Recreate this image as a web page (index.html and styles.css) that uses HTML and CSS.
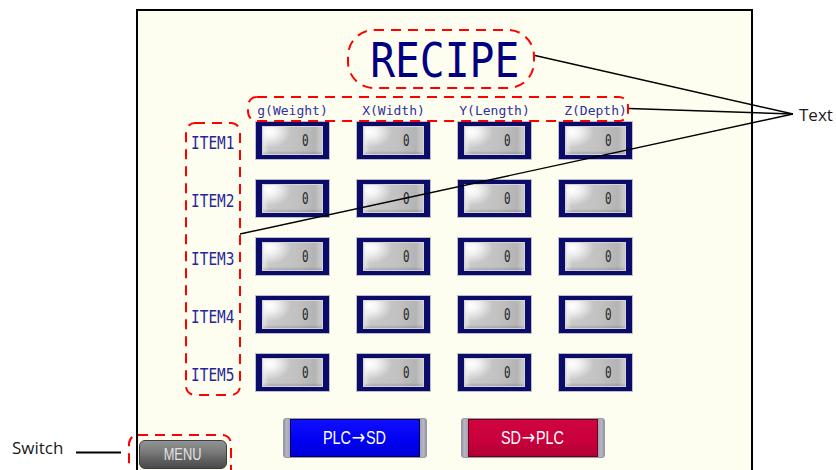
FILE: index.html
```html
<!DOCTYPE html>
<html lang="en">
<head>
<meta charset="utf-8">
<title>Recipe</title>
<link rel="stylesheet" href="styles.css">
</head>
<body>
<div class="stage">
  <div class="panel">
    <h1 class="title"><span>RECIPE</span></h1>

    <div class="head">
      <span></span>
      <span class="col-label">g(Weight)</span>
      <span class="col-label">X(Width)</span>
      <span class="col-label">Y(Length)</span>
      <span class="col-label">Z(Depth)</span>
    </div>

    <div class="rows">
      <div class="item"><span>ITEM1</span></div>
      <div class="cell"><div class="field"><span>0</span></div></div>
      <div class="cell"><div class="field"><span>0</span></div></div>
      <div class="cell"><div class="field"><span>0</span></div></div>
      <div class="cell"><div class="field"><span>0</span></div></div>

      <div class="item"><span>ITEM2</span></div>
      <div class="cell"><div class="field"><span>0</span></div></div>
      <div class="cell"><div class="field"><span>0</span></div></div>
      <div class="cell"><div class="field"><span>0</span></div></div>
      <div class="cell"><div class="field"><span>0</span></div></div>

      <div class="item"><span>ITEM3</span></div>
      <div class="cell"><div class="field"><span>0</span></div></div>
      <div class="cell"><div class="field"><span>0</span></div></div>
      <div class="cell"><div class="field"><span>0</span></div></div>
      <div class="cell"><div class="field"><span>0</span></div></div>

      <div class="item"><span>ITEM4</span></div>
      <div class="cell"><div class="field"><span>0</span></div></div>
      <div class="cell"><div class="field"><span>0</span></div></div>
      <div class="cell"><div class="field"><span>0</span></div></div>
      <div class="cell"><div class="field"><span>0</span></div></div>

      <div class="item"><span>ITEM5</span></div>
      <div class="cell"><div class="field"><span>0</span></div></div>
      <div class="cell"><div class="field"><span>0</span></div></div>
      <div class="cell"><div class="field"><span>0</span></div></div>
      <div class="cell"><div class="field"><span>0</span></div></div>
    </div>

    <div class="footer">
      <button class="menu" type="button"><span>MENU</span></button>
      <div class="actions">
        <button class="btn btn-blue" type="button"><span class="face"><span>PLC<span class="arrow">→</span>SD</span></span></button>
        <button class="btn btn-red" type="button"><span class="face"><span>SD<span class="arrow">→</span>PLC</span></span></button>
      </div>
      <span></span>
    </div>
  </div>
</div>

<div class="annot">
  <svg width="836" height="470" viewBox="0 0 836 470">
    <g fill="none" stroke="#ff0000" stroke-width="2" stroke-dasharray="10 7">
      <rect x="348" y="30" width="186" height="58" rx="26"/>
      <rect x="248" y="97" width="380" height="24" rx="9"/>
      <rect x="186" y="123" width="54" height="272" rx="9"/>
      <rect x="129" y="435" width="102" height="50" rx="9"/>
    </g>
    <g stroke="#000" stroke-width="1.4">
      <line x1="535" y1="55.5" x2="793" y2="114"/>
      <line x1="629" y1="108.5" x2="793" y2="114"/>
      <line x1="240" y1="234" x2="793" y2="114"/>
      <line x1="76" y1="452.5" x2="121" y2="452.5" stroke-width="2"/>
    </g>
  </svg>
  <span class="callout callout-text">Text</span>
  <span class="callout callout-switch">Switch</span>
</div>
</body>
</html>
```

FILE: styles.css
```css
* { box-sizing: border-box; }

html, body {
  margin: 0;
  padding: 0;
  background: #ffffff;
}

body {
  width: 836px;
  height: 470px;
  overflow: hidden;
  position: relative;
  font-family: "DejaVu Sans Mono", monospace;
}

.stage {
  padding: 9px 0 0 136px;
}

.panel {
  width: 617px;
  height: 480px;
  border: 2px solid #000;
  border-bottom: none;
  background: #fefef0;
  display: flex;
  flex-direction: column;
}

.title {
  margin: 25px 0 0;
  font-family: "DejaVu Sans Mono", monospace;
  font-weight: normal;
  font-size: 48px;
  line-height: 48px;
  text-align: center;
  color: #000080;
}
.title span {
  display: inline-block;
  transform: scaleX(0.86);
}

.head,
.rows {
  display: grid;
  grid-template-columns: 37px repeat(4, 73px);
  column-gap: 28px;
  padding-left: 53px;
}

.head {
  margin-top: 19px;
  height: 16px;
}

.col-label {
  font-size: 13px;
  line-height: 16px;
  color: #3030a0;
  text-align: center;
  white-space: nowrap;
}

.rows {
  margin-top: 3px;
  grid-auto-rows: 37px;
  row-gap: 21px;
}

.item {
  font-size: 18.5px;
  line-height: 41px;
  color: #26269a;
  white-space: nowrap;
}
.item span {
  display: inline-block;
  transform: scaleX(0.78);
  transform-origin: left center;
}

.cell {
  width: 73px;
  height: 37px;
  padding: 4px 6px;
  background: #0b0b6a;
  box-shadow: 0 0 0 1px rgba(70, 70, 130, 0.35);
}

.field {
  height: 100%;
  border: 1px solid #d4d4d4;
  padding-right: 13px;
  text-align: right;
  font-size: 16px;
  line-height: 27px;
  color: #222222;
  background:
    radial-gradient(ellipse 22px 16px at 6px 5px, #ffffff 0, #f2f2f2 35%, rgba(235,235,235,0) 100%),
    linear-gradient(90deg, #e6e6e6 0, #c9c9c9 10%, #c2c2c2 55%, #b4b4b4 88%, #cfcfcf 100%);
  box-shadow: inset 0 -2px 2px rgba(0, 0, 0, 0.12);
}
.field span {
  display: inline-block;
  transform: scaleX(0.68);
  transform-origin: right center;
}

.footer {
  margin-top: 27px;
  height: 51px;
  padding-right: 2px;
  display: grid;
  grid-template-columns: 1fr auto 1fr;
}

.menu {
  align-self: end;
  justify-self: start;
  margin: 0 0 0 1px;
  width: 88px;
  height: 29px;
  padding: 0;
  border: 1px solid #3c3c3c;
  border-radius: 6px;
  background: linear-gradient(180deg, #939393 0, #7a7a7a 40%, #5c5c5c 75%, #4a4a4a 100%);
  color: #e2e2e2;
  font-family: "Liberation Sans", "DejaVu Sans", sans-serif;
  font-size: 16px;
  line-height: 24px;
}
.menu span {
  display: inline-block;
  transform: scaleX(0.8);
}

.actions {
  align-self: start;
  display: flex;
  gap: 34px;
}

.btn {
  display: flex;
  width: 144px;
  height: 40px;
  margin: 0;
  padding: 1px 7px;
  border: none;
  border-radius: 4px;
  background: linear-gradient(90deg, #7c7c88 0, #b8b8c6 3px, #a2a2b0 7px, #a2a2b0 calc(100% - 7px), #b8b8c6 calc(100% - 3px), #7c7c88 100%);
  box-shadow: 0 0 0 1px #9a9aa4 inset;
  font-family: "Liberation Sans", "DejaVu Sans", sans-serif;
}

.face {
  flex: 1;
  display: flex;
  align-items: center;
  justify-content: center;
  color: #ffffff;
  font-size: 18px;
}
.face > span {
  display: inline-block;
  transform: scaleX(0.8);
}
.arrow {
  font-family: "DejaVu Sans", sans-serif;
  font-size: 20px;
  line-height: 1;
  margin: 0 1px;
}

.btn-blue .face {
  background: linear-gradient(180deg, #1010ff 0, #0000f0 60%, #0000d8 100%);
  border: 1px solid #00005a;
}

.btn-red .face {
  background: linear-gradient(180deg, #d0043f 0, #c8003c 60%, #b00034 100%);
  border: 1px solid #6e001c;
}

.annot {
  position: absolute;
  inset: 0;
  pointer-events: none;
}
.annot svg {
  position: absolute;
  left: 0;
  top: 0;
}

.callout {
  position: absolute;
  font-family: "Open Sans", "Noto Sans", sans-serif;
  font-size: 17px;
  line-height: 20px;
  color: #1a1a1a;
  white-space: nowrap;
}
.callout-text {
  left: 799px;
  top: 105px;
}
.callout-switch {
  left: 12px;
  top: 438px;
}
```
